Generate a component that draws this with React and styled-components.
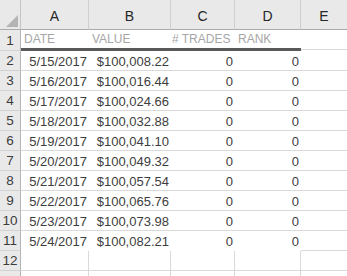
import React from 'react';
import styled, { createGlobalStyle } from 'styled-components';

const Global = createGlobalStyle`
  html, body { margin: 0; padding: 0; background: #ffffff; overflow: hidden; }
  * { box-sizing: border-box; }
`;

const COLS = '21px 68px 82px 64px 66px 1fr';
const GRID = '#d9d9d9';
const HEAD_BG = '#e9e9e9';

const Sheet = styled.div`
  width: 347px;
  height: 276px;
  overflow: hidden;
  font-family: "Liberation Sans", Arial, sans-serif;
`;

const Row = styled.div`
  display: grid;
  grid-template-columns: ${COLS};
  height: ${p => p.$h}px;
`;

const Corner = styled.div`
  background: ${HEAD_BG};
  border-right: 1px solid #c4c4c4;
  border-bottom: 1px solid #ababab;
  display: flex;
  align-items: flex-end;
  justify-content: flex-end;
  padding: 0 2px 2px 0;
`;

const ColHead = styled.div`
  background: ${HEAD_BG};
  border-right: ${p => (p.$last ? 'none' : '1px solid #cfcfcf')};
  border-bottom: 1px solid #ababab;
  display: flex;
  align-items: center;
  justify-content: center;
  padding-top: 2px;
  font-size: 14px;
  color: #262626;
`;

const RowHead = styled.div`
  background: ${HEAD_BG};
  border-right: 1px solid #b5b5b5;
  border-bottom: 1px solid #d2d2d2;
  display: flex;
  align-items: center;
  justify-content: center;
  font-size: 13.5px;
  color: #3c3c3c;
`;

const borders = {
  none: 'none',
  thin: `1px solid ${GRID}`,
  thick: '3px solid #595959',
};

const Cell = styled.div`
  display: flex;
  align-items: center;
  justify-content: ${p => (p.$right ? 'flex-end' : 'flex-start')};
  padding: ${p => (p.$right ? '0 2px 0 0' : `0 0 0 ${p.$pl ?? 3}px`)};
  border-bottom: ${p => borders[p.$bottom || 'none']};
  border-right: ${p => (p.$vline ? `1px solid ${GRID}` : 'none')};
  height: ${p => (p.$h ? `${p.$h}px` : 'auto')};
  align-self: ${p => (p.$h ? 'start' : 'stretch')};
  white-space: nowrap;
  overflow: hidden;
  font-size: ${p => (p.$title ? '12px' : '13px')};
  color: ${p => (p.$title ? '#a6a6a6' : '#3d3d3d')};
  padding-top: ${p => (p.$title ? '0' : '1px')};
`;

const Triangle = () => (
  <svg width="12" height="12" viewBox="0 0 12 12">
    <polygon points="12,0 12,12 0,12" fill="#b4b4b4" />
  </svg>
);

const data = [
  ['5/15/2017', '$100,008.22'],
  ['5/16/2017', '$100,016.44'],
  ['5/17/2017', '$100,024.66'],
  ['5/18/2017', '$100,032.88'],
  ['5/19/2017', '$100,041.10'],
  ['5/20/2017', '$100,049.32'],
  ['5/21/2017', '$100,057.54'],
  ['5/22/2017', '$100,065.76'],
  ['5/23/2017', '$100,073.98'],
  ['5/24/2017', '$100,082.21'],
];

export default function App() {
  return (
    <Sheet>
      <Global />
      <Row $h={30}>
        <Corner><Triangle /></Corner>
        {['A', 'B', 'C', 'D', 'E'].map((l, i) => (
          <ColHead key={l} $last={i === 4}>{l}</ColHead>
        ))}
      </Row>
      <Row $h={21}>
        <RowHead>1</RowHead>
        <Cell $title $bottom="thick">DATE</Cell>
        <Cell $title $bottom="thick">VALUE</Cell>
        <Cell $title $bottom="thick" $pl={1}># TRADES</Cell>
        <Cell $title $bottom="thick">RANK</Cell>
        <Cell $bottom="thin" $h={20} />
      </Row>
      {data.map(([d, v], i) => {
        const last = i === data.length - 1;
        const b = last ? 'none' : 'thin';
        return (
          <Row key={d} $h={20}>
            <RowHead>{i + 2}</RowHead>
            <Cell $right $bottom={b}>{d}</Cell>
            <Cell $right $bottom={b}>{v}</Cell>
            <Cell $right $bottom={b}>0</Cell>
            <Cell $right $bottom={b}>0</Cell>
            <Cell $bottom="thin" />
          </Row>
        );
      })}
      <Row $h={20}>
        <RowHead>12</RowHead>
        <Cell $vline $bottom="thin" />
        <Cell $vline $bottom="thin" />
        <Cell $vline $bottom="thin" />
        <Cell $vline $bottom="thin" />
        <Cell $bottom="thin" />
      </Row>
      <Row $h={20}>
        <RowHead />
        <Cell $vline />
        <Cell $vline />
        <Cell $vline />
        <Cell $vline />
        <Cell />
      </Row>
    </Sheet>
  );
}
